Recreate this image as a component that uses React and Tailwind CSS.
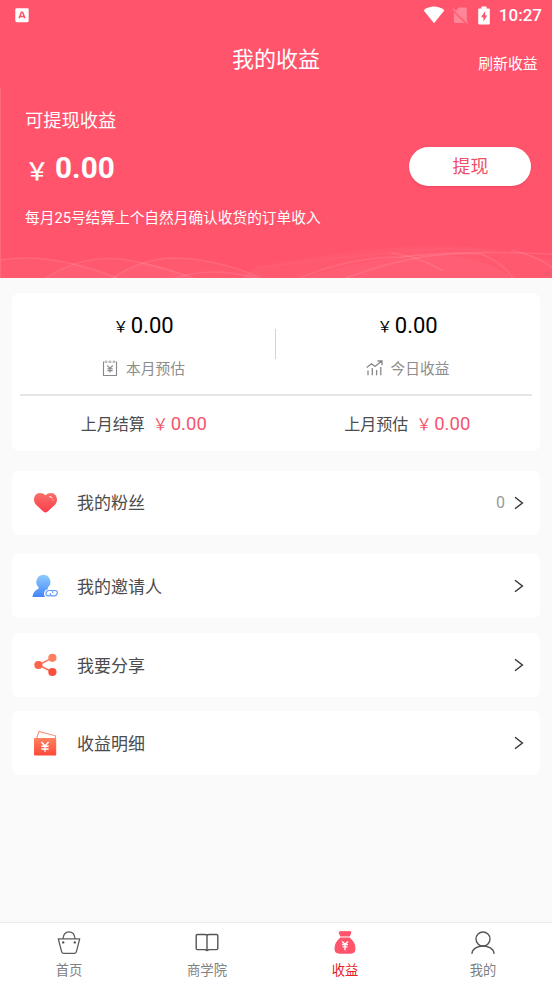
import React from 'react';

const Yen = ({ className }) => <span className={className}>￥</span>;

function StatusBar() {
  return (
    <div className="flex h-[30px] items-center pl-[15px] pr-[10px]">
      <svg width="14" height="15" viewBox="0 0 14 15">
        <rect x="0.3" y="0.2" width="13.4" height="14" rx="1.4" fill="#fff" />
        <path d="M4.1 10.2 6.4 4.2H7.6L9.9 10.2M5 8.4H9" fill="none" stroke="#ff546c" strokeWidth="1.5" />
      </svg>
      <div className="ml-auto flex items-center">
        <svg width="22" height="18" viewBox="0 0 22 18" fill="#fff">
          <path d="M0.6 4.2C6.7-.7 15.3-.7 21.4 4.2L11 17.2Z" />
        </svg>
        <svg className="ml-[7px]" width="17" height="17" viewBox="0 0 17 17">
          <path d="M3.5 3.5 14.8 14.8V1.9Q14.8.6 13.5.6H7L4 3.5ZM1.9 5.2V14.6Q1.9 16 3.3 16H12.7Z" fill="#ff8698" />
          <path d="M.8 1.8 15.8 16.2" stroke="#ff8698" strokeWidth="1.2" />
        </svg>
        <svg className="ml-[9px]" width="12" height="19" viewBox="0 0 12 19">
          <path d="M3.5 0.5H8.5V2.5H10.6Q11.8 2.5 11.8 3.7V17.2Q11.8 18.5 10.6 18.5H1.4Q.2 18.5.2 17.2V3.7Q.2 2.5 1.4 2.5H3.5Z" fill="#fff" />
          <path d="M7.2 5 3 11.2H5.4V15.5L9.2 9.4H7.2Z" fill="#ff546c" />
        </svg>
        <span className="ml-[9px] text-[17px] leading-none font-medium">10:27</span>
      </div>
    </div>
  );
}

function Waves() {
  return (
    <svg className="absolute bottom-0 left-0" width="552" height="38" viewBox="0 0 552 38" fill="none">
      <g fill="#fff" fillOpacity="0.03">
        <path d="M0 20Q50 12 116 38H0Z" />
        <path d="M45 38Q78 18 115 19Q155 21 190 38Z" />
        <path d="M112 38Q140 19 170 18Q215 18 260 38Z" />
        <path d="M255 27Q350 8 430 6Q500 6 552 20V38H240Z" />
        <path d="M300 38Q390 12 440 14Q485 18 512 38Z" />
      </g>
      <g stroke="#fff" strokeOpacity="0.1" strokeWidth="1.5">
        <path d="M0 20Q50 12 116 38" />
        <path d="M45 38Q90 8 145 24Q170 30 192 38" />
        <path d="M112 38Q140 19 170 18Q215 18 260 38" />
        <path d="M175 38Q210 26 255 38" />
        <path d="M298 38Q350 17 400 17Q455 10 552 14" />
        <path d="M345 38Q420 10 480 14Q500 21 512 38" />
        <path d="M390 13Q420 17 442 31" />
        <path d="M510 10Q536 16 552 28" />
        <path d="M255 28Q330 18 390 13Q435 7 476 10" strokeOpacity="0.03" />
      </g>
    </svg>
  );
}

function Hero() {
  return (
    <section className="relative h-[190px] border-l border-[#ff6a7f] pl-[24px] pr-[21px] pt-[20px]">
      <Waves />
      <div className="text-[18.3px] leading-[26px]">可提现收益</div>
      <div className="mt-[13px] flex h-[40px] items-start justify-between">
        <div className="flex items-baseline pt-[1px] leading-[40px]">
          <Yen className="relative top-[2px] w-[30px] text-[24px] font-medium" />
          <span className="text-[29.7px] font-bold">0.00</span>
        </div>
        <button className="h-[39px] w-[122px] rounded-full bg-white pl-[1px] text-[18px] leading-[39px] text-[#ef5069] shadow-[0_1px_2px_rgba(190,40,65,0.35)]">提现</button>
      </div>
      <div className="mt-[20px] text-[14.7px] leading-[22px]">每月25号结算上个自然月确认收货的订单收入</div>
    </section>
  );
}

const CalendarYen = () => (
  <svg className="-mt-[2px]" width="16" height="17" viewBox="0 0 16 17" fill="none" stroke="#888" strokeWidth="1.1">
    <path d="M2.5 2H1.5V15.5H14.5V2H13.5M5.5 2H6.5M9.5 2H10.5M4 .5V3M8 .5V3M12 .5V3M5.3 5.5 8 8.3 10.7 5.5M8 8.3V12.5M5.3 8.7H10.7M5.3 10.6H10.7" />
  </svg>
);

const TrendIcon = () => (
  <svg className="-mt-[2px]" width="17" height="16" viewBox="0 0 17 16" fill="none" stroke="#888" strokeWidth="1.3">
    <path d="M.7 7.5 5.5 3.8 9 6.5 15.5 1.3M11.5 1H16V5.3M2 10.5V15.3M6.3 8V15.3M10.6 10V15.3M14.8 7V15.3" />
  </svg>
);

function Stat({ icon, label }) {
  return (
    <div className="flex flex-1 flex-col items-center">
      <div className="flex items-baseline leading-[30px] text-black">
        <Yen className="relative -top-px w-[17.5px] text-[15px]" />
        <span className="text-[22px]">0.00</span>
      </div>
      <div className="mt-[15px] flex h-[22px] items-center gap-[8px] text-[14.7px] text-[#8c8c8c]">
        {icon}
        <span>{label}</span>
      </div>
    </div>
  );
}

function Settled({ label }) {
  return (
    <div className="flex flex-1 items-baseline justify-center leading-[24px]">
      <span className="text-[16px] text-[#4c4c4c]">{label}</span>
      <Yen className="ml-[8px] w-[18px] text-[15.5px] text-[#f4556d]" />
      <span className="text-[18.5px] text-[#f4556d]">0.00</span>
    </div>
  );
}

function Summary() {
  return (
    <section className="mx-[12px] mt-[15px] h-[158px] rounded-[7px] bg-white pt-[18px]">
      <div className="flex h-[83px] pr-[1px]">
        <Stat icon={<CalendarYen />} label="本月预估" />
        <div className="mt-[18px] h-[30px] w-px shrink-0 bg-[#d4d4d4]" />
        <Stat icon={<TrendIcon />} label="今日收益" />
      </div>
      <div className="mx-[8px] h-[2px] bg-[#e5e5e5]" />
      <div className="flex pt-[16px] pr-[1px]">
        <Settled label="上月结算" />
        <Settled label="上月预估" />
      </div>
    </section>
  );
}

const Heart = () => (
  <svg width="26" height="26" viewBox="0 0 26 26">
    <defs><linearGradient id="heart" x2="0" y2="1"><stop stopColor="#f87068" /><stop offset="1" stopColor="#fa3d4c" /></linearGradient></defs>
    <path d="M13.5 22.5Q12.5 22.5 11.3 21.4L4 14.8C.2 10.8 2 3 8 3Q11.4 3 13.5 5.2Q15.6 3 19 3C25 3 26.8 10.8 23 14.8L15.7 21.4Q14.5 22.5 13.5 22.5Z" fill="url(#heart)" />
    <path d="M17.6 6.6Q19.2 6.8 20 8" stroke="#ffe3df" strokeWidth="1.1" strokeLinecap="round" fill="none" />
    <circle cx="21" cy="10" r=".6" fill="#ffe3df" />
  </svg>
);

const Inviter = () => (
  <svg width="26" height="26" viewBox="0 0 26 26">
    <defs><linearGradient id="inviter" x2="0" y2="1"><stop stopColor="#8fcbff" /><stop offset="1" stopColor="#4385f8" /></linearGradient></defs>
    <path d="M11.2 1.8A7.2 7.2 0 0 1 15.8 14.5V16.2Q12.5 17 12 20Q11.8 22.3 13 24H.4Q1 18 6.6 15.8V14.2A7.2 7.2 0 0 1 11.2 1.8Z" fill="url(#inviter)" />
    <path d="M18.2 22.9H16.3Q13.6 22.9 14 20.2Q14.6 17.5 17 17.5H19.2Q21.3 17.7 20.6 20.2M20.9 17.5H23Q25.7 17.5 25.2 20.2Q24.6 22.9 22.4 22.9H20Q17.8 22.7 18.4 20.2" fill="none" stroke="#619bf8" strokeWidth="1.2" />
  </svg>
);

const Share = () => (
  <svg width="26" height="26" viewBox="0 0 26 26">
    <path d="M20.3 5.8 6.5 13 20.3 20" stroke="#fb7257" strokeWidth="1.5" fill="none" />
    <circle cx="20.4" cy="5.8" r="4.1" fill="#ff8060" />
    <circle cx="6.4" cy="13" r="4.1" fill="#fc654b" />
    <circle cx="20.4" cy="20" r="4.1" fill="#f94f3d" />
  </svg>
);

const Wallet = () => (
  <svg width="26" height="28" viewBox="0 0 26 28">
    <defs><linearGradient id="wallet" x2="0" y2="1"><stop stopColor="#fd8160" /><stop offset="1" stopColor="#ff4938" /></linearGradient></defs>
    <path d="M4.6 9.5 7 2.4 23.4 6.8V9.5" stroke="#fb8f76" strokeWidth="1.1" fill="none" />
    <rect x="2" y="9" width="22.2" height="17.6" rx="1" fill="url(#wallet)" />
    <path d="M9.4 13 13 17 16.6 13M13 17V22.8M9.4 17.2H16.6M9.4 20H16.6" stroke="#fff" strokeWidth="1.4" fill="none" />
  </svg>
);

function MenuRow({ icon, label, value, className, labelClass = 'pt-[1px]' }) {
  return (
    <div className={`mx-[12px] flex h-[64px] items-center rounded-[7px] bg-white pl-[20px] pr-[16px] ${className}`}>
      <div className="flex w-[45px] items-center">{icon}</div>
      <span className={`text-[17px] leading-[24px] text-[#4c4c4c] ${labelClass}`}>{label}</span>
      <span className="ml-auto text-[16px] text-[#999]">{value}</span>
      <svg className="ml-[9px]" width="10" height="14" viewBox="0 0 10 14" fill="none" stroke="#333" strokeWidth="1.4">
        <path d="M1 1.3 8.4 7 1 12.7" />
      </svg>
    </div>
  );
}

const Basket = () => (
  <svg width="24" height="26" viewBox="0 0 24 26" fill="none" stroke="#5c5c5c" strokeWidth="1.3" strokeLinejoin="round">
    <path d="M1.3 8.8H22.7L19.4 21.6Q18.9 23.3 17.2 23.3H6.8Q5.1 23.3 4.6 21.6ZM6 8.5C7 -.3 17 -.3 18 8.5" />
    <g fill="#555" stroke="none"><circle cx="6.2" cy="12.4" r="1.2" /><circle cx="17.8" cy="12.4" r="1.2" /></g>
  </svg>
);

const Book = () => (
  <svg width="24" height="26" viewBox="0 0 24 26" fill="none" stroke="#555" strokeWidth="1.4" strokeLinejoin="round">
    <path d="M12 5.2Q11.5 4.5 9.5 4.5H2.5Q1.2 4.5 1.2 5.7V18.5Q1.2 19.6 2.5 19.6H10L12 20.5 14 19.6H21.5Q22.8 19.6 22.8 18.5V5.7Q22.8 4.5 21.5 4.5H14.5Q12.5 4.5 12 5.2V20.5" />
  </svg>
);

const MoneyBag = () => (
  <svg width="24" height="26" viewBox="0 0 24 26">
    <path d="M7 1.3Q9 .8 10 1.3Q12 .7 14 1.3Q16 .8 17.5 1.3Q18.8 1.8 18.2 3.2L16.7 6.5H7.3L5.8 3.2Q5.2 1.8 7 1.3ZM7.4 7.6H16.6Q22.5 12.5 22.5 18.5Q22.5 23.7 17.5 23.7H6.5Q1.5 23.7 1.5 18.5Q1.5 12.5 7.4 7.6Z" fill="#ff546c" />
    <path d="M9 11.5 12 14 15 11.5M12 14V20.3M9 14.5H15M9.6 16.8H14.4" stroke="#fff" strokeWidth="1.3" fill="none" />
  </svg>
);

const Person = () => (
  <svg width="24" height="26" viewBox="0 0 24 26" fill="none" stroke="#555" strokeWidth="1.4" strokeLinecap="round">
    <circle cx="12" cy="9" r="7" />
    <path d="M1 23.3C2 13.6 22 13.6 23 23.3" />
  </svg>
);

const tabs = [
  { label: '首页', icon: <Basket /> },
  { label: '商学院', icon: <Book /> },
  { label: '收益', icon: <MoneyBag />, active: true },
  { label: '我的', icon: <Person /> },
];

export default function App() {
  return (
    <div className="flex h-[983px] w-[552px] flex-col overflow-hidden bg-[#fafafa] font-[Roboto,'Noto_Sans_CJK_SC',sans-serif]">
      <header className="h-[278px] shrink-0 bg-[#ff546c] text-white">
        <StatusBar />
        <div className="grid h-[58px] grid-cols-3">
          <h1 className="col-start-2 pt-[15px] text-center text-[22px] leading-[30px]">我的收益</h1>
          <span className="pt-[23px] pr-[14.5px] text-right text-[14.8px] leading-[22px]">刷新收益</span>
        </div>
        <Hero />
      </header>
      <main className="flex-1">
        <Summary />
        <MenuRow className="mt-[20px]" icon={<Heart />} label="我的粉丝" value="0" labelClass="" />
        <MenuRow className="mt-[19px]" icon={<Inviter />} label="我的邀请人" />
        <MenuRow className="mt-[15px]" icon={<Share />} label="我要分享" />
        <MenuRow className="mt-[14px]" icon={<Wallet />} label="收益明细" />
      </main>
      <nav className="grid h-[61px] shrink-0 grid-cols-4 border-t border-[#ececec] bg-white">
        {tabs.map((tab) => (
          <div key={tab.label} className="flex flex-col items-center pt-[7px]">
            {tab.icon}
            <span className={`mt-[5px] text-[13.3px] leading-[20px] ${tab.active ? 'text-[#e52222]' : 'text-[#808080]'}`}>{tab.label}</span>
          </div>
        ))}
      </nav>
    </div>
  );
}
